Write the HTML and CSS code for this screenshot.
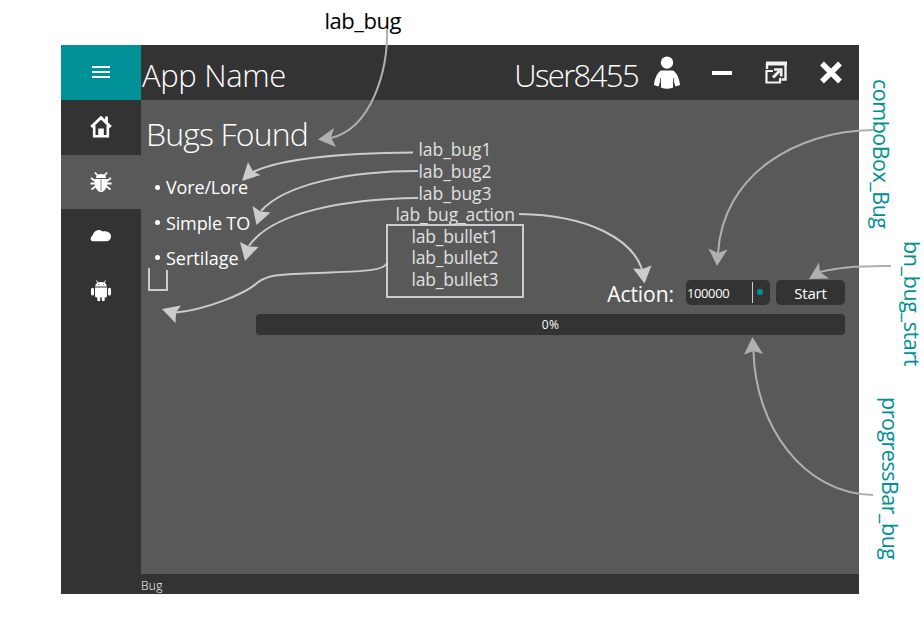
FILE: index.html
```html
<!DOCTYPE html>
<html lang="en">
<head>
<meta charset="utf-8">
<title>App Name</title>
<link rel="stylesheet" href="styles.css">
</head>
<body>
<div class="window">
  <header class="topbar">
    <button class="menu" aria-label="Menu"><svg width="18" height="14" viewBox="0 0 18 14"><path d="M0 1H18M0 6H18M0 11H18" stroke="#fff" stroke-width="2"/></svg></button>
    <h1 class="app-name">App Name</h1>
    <span class="user">User8455</span>
    <svg class="person" width="28" height="34" viewBox="0 0 28 34" fill="#fff"><circle cx="14" cy="6.6" r="6.2"/><path d="M8 14.5H20C24 17 26.5 23 27 29L22.5 30.5 20.2 24V31.5Q14 34 7.800 31.500V24L5.500 30.500 1 29C1.500 23 4 17 8 14.500Z"/><path d="M7.400 22V31M20.600 22V31" stroke="#333" stroke-width=".8"/></svg>
    <div class="controls">
      <svg width="22" height="24" viewBox="0 0 22 24"><path d="M1 12H21" stroke="#fff" stroke-width="4"/></svg>
      <svg width="22" height="24" viewBox="0 0 22 24" fill="none" stroke="#f2f2f2"><path d="M1 2.500H22" stroke-width="4"/><path d="M2 2V8M20.500 2V18.500H16.500" stroke-width="2.400"/><path d="M8 10H1.500V21.500H15V17" stroke-width="2.200"/><path d="M8 16.500L14.500 10" stroke-width="3"/><path d="M9 8.500H16.200V15.500" stroke-width="2.600"/></svg>
      <svg width="24" height="24" viewBox="0 0 24 24"><path d="M3 2.500L21 20.500M21 2.500L3 20.500" stroke="#fff" stroke-width="5.400"/></svg>
    </div>
  </header>
  <div class="body">
    <nav class="sidebar">
      <a class="item"><svg width="22" height="22" viewBox="0 0 22 22" fill="none" stroke="#fff"><path d="M1.200 11L11 1.700 20.800 11" stroke-width="3"/><path d="M16.500 .500V7" stroke-width="2.800"/><path d="M4.200 9.500V20.300H17.800V9.500" stroke-width="2.600"/><path d="M8.200 21V12.500H13.800V21Z" fill="#fff" stroke="none"/></svg></a>
      <a class="item active"><svg width="22" height="22" viewBox="0 0 22 22"><path d="M5 1.500L8 5M17 1.500L14 5M1 7L5 10M21 7L17 10M.500 12.500H21.500M1.500 18.500L6 15M20.500 18.500L16 15" stroke="#fff" stroke-width="1.800" fill="none"/><path d="M6 7C6 1.800 16 1.800 16 7ZM4.800 8H17.200C18 14 16 20.500 11 21.200 6 20.500 4 14 4.800 8Z" fill="#fff"/><path d="M11 8V20" stroke="#777" stroke-width=".9"/></svg></a>
      <a class="item"><svg width="22" height="22" viewBox="0 0 22 22" fill="#fff"><path d="M2.800 16.300C-.500 15.800 .500 11.800 2.500 10.500 4 5.300 8.500 3.300 12.500 6.500 16 5.500 21.300 7.500 21 11.500 20.900 14.500 19 16.300 16.500 16.300Z"/></svg></a>
      <a class="item"><svg width="22" height="22" viewBox="0 0 22 22" fill="#fff"><path d="M5.200 6.500C5.200 .600 16.800 .600 16.800 6.500ZM5 7.500H17V16Q17 17.500 15 17.500H14.700V20.500Q13.200 22 11.800 20.500V17.500H10.200V20.500Q8.800 22 7.300 20.500V17.500H7Q5 17.500 5 16Z"/><path d="M6.500 .500L8 3M15.500 .500L14 3" stroke="#fff" stroke-width="1"/><path d="M2.500 9.200V14M19.500 9.200V14" stroke="#fff" stroke-width="3" stroke-linecap="round"/><path d="M8 4.500H9M13 4.500H14" stroke="#888"/></svg></a>
    </nav>
    <main class="content">
      <h2 class="title">Bugs Found</h2>
      <ul class="bugs"><li>Vore/Lore</li><li>Simple TO</li><li>Sertilage</li></ul>
      <div class="actions">
        <span class="action-label">Action:</span>
        <div class="combo"><span class="value">100000</span><span class="drop"><i class="dot"></i></span></div>
        <button class="start">Start</button>
      </div>
      <div class="progress">0%</div>
    </main>
  </div>
  <footer class="status">Bug</footer>
</div>

<svg class="notes" width="924" height="639" viewBox="0 0 924 639">
  <g class="line dim">
    <path d="M387 29C388 70 372 128 331 138"/>
    <path d="M873 130C795 131 723 175 718 253"/>
    <path d="M891 266C860 265.500 835 268 820 272"/>
    <path d="M873 495C803 494 755 425 753.500 351"/>
  </g>
  <g class="head dim">
    <path d="M318 139.500L334 128 331 137.500 336 147Z"/>
    <path d="M717 266L708.500 248.500 718 253 727.500 249.500Z"/>
    <path d="M809 279L819 262.500 820 272 829 278.500Z"/>
    <path d="M752.500 337L744 354.500 753.500 351 763 354Z"/>
  </g>
  <g class="line">
    <path d="M413 152.500C350 153 285 157 253 172"/>
    <path d="M418 171C350 171 285 184 261 211"/>
    <path d="M418 198C345 199 272 212 249 246"/>
    <path d="M387 263C383 273 350 271 293 274C275 275 266 276 257 283C245 294 205 310 176 312.500"/>
    <path d="M519 214C590 215 632 240 642 269"/>
    <path d="M149 268V290H167V270"/>
    <rect x="387" y="225" width="136" height="72"/>
  </g>
  <g class="head">
    <path d="M242 181L248 162 253 171.500 260.500 175Z"/>
    <path d="M256.500 225L252.500 206 260.500 211.500 270.500 212.500Z"/>
    <path d="M245 261L240 242 249 246.500 258.500 247Z"/>
    <path d="M162 309L181 305.500 176 312.500 175.500 323Z"/>
    <path d="M644.500 283.500L633 268.500 642.500 269 651.500 265.500Z"/>
  </g>
  <text class="big" x="324.500" y="28.500" textLength="77">lab_bug</text>
  <g class="small">
    <text x="418.500" y="156" textLength="73">lab_bug1</text>
    <text x="418.500" y="178" textLength="73">lab_bug2</text>
    <text x="418.500" y="200" textLength="73">lab_bug3</text>
    <text x="395.500" y="221" textLength="119.500">lab_bug_action</text>
    <text x="411.500" y="243" textLength="87">lab_bullet1</text>
    <text x="411.500" y="264" textLength="87">lab_bullet2</text>
    <text x="411.500" y="286" textLength="87">lab_bullet3</text>
  </g>
  <g class="side">
    <text transform="translate(873 79) rotate(90)" textLength="150">comboBox_Bug</text>
    <text transform="translate(904 241) rotate(90)" textLength="125.500">bn_bug_start</text>
    <text transform="translate(882 397) rotate(90)" textLength="163">progressBar_bug</text>
  </g>
</svg>
</body>
</html>
```
FILE: styles.css
```css
* { box-sizing: border-box; }
body {
  margin: 0;
  padding: 45px 0 0 61px;
  height: 639px;
  overflow: hidden;
  background: #fff;
  color: #fff;
  font-family: "Open Sans", "Noto Sans", sans-serif;
}
button { border: 0; padding: 0; color: inherit; font: inherit; }
h1, h2, ul { margin: 0; padding: 0; font-weight: 300; }
svg { display: block; flex: none; }

.window { width: 798px; height: 549px; display: flex; flex-direction: column; background: #333; }

.topbar { height: 55px; display: flex; align-items: center; padding-right: 16px; }
.menu { width: 80px; height: 55px; background: #009097; display: grid; place-items: center; }
.app-name { flex: 1; padding: 5px 0 0 1px; font-size: 31px; line-height: 50px; letter-spacing: -0.35px; }
.user { padding-top: 5px; font-size: 31px; font-weight: 300; line-height: 50px; letter-spacing: -1.6px; }
.person { margin: 0 30px 0 15px; }
.controls { display: flex; gap: 32px; }

.body { flex: 1; display: flex; }
.sidebar { width: 80px; }
.item { height: 54.5px; display: grid; place-items: center; }
.active { background: #595959; }

.content { flex: 1; background: #595959; padding: 12px 14px 0 0; }
.title { padding-left: 5px; font-size: 32px; line-height: 44px; letter-spacing: -0.85px; }
.bugs { list-style: none; margin-top: 13px; }
.bugs li { display: flex; align-items: center; height: 36px; padding-left: 14px; gap: 6px; font-size: 18px; font-weight: 400; line-height: 36px; letter-spacing: -0.15px; }
.bugs li:nth-child(3) { height: 35px; line-height: 35px; letter-spacing: 0; }
.bugs li::before { content: ""; width: 5px; height: 5px; border-radius: 50%; background: #fff; }
.bugs li:nth-child(2)::before { margin-top: -1px; }
.bugs li:nth-child(3)::before { margin-top: -2px; }

.actions { display: flex; justify-content: flex-end; height: 25px; margin-top: 4px; }
.action-label { margin-right: 12px; padding-top: 2px; font-size: 21px; line-height: 25px; letter-spacing: -0.05px; }
.combo { width: 84px; display: flex; align-items: center; border-radius: 5px; background: #333; }
.value { flex: 1; padding: 2px 0 0 1px; font-size: 13px; line-height: 23px; letter-spacing: -0.4px; }
.drop { width: 18px; height: 21px; display: flex; align-items: center; padding-left: 4px; border-left: 1px solid #ccc; }
.dot { width: 6px; height: 6px; margin-top: -1px; border-radius: 50%; background: #009097; }
.start { width: 69px; margin-left: 6px; padding-top: 2px; border-radius: 5px; background: #333; font-size: 15px; line-height: 23px; letter-spacing: -0.2px; }
.progress { height: 21px; margin: 9px 0 0 115px; border-radius: 4px; background: #333; text-align: center; font-size: 12px; line-height: 22px; letter-spacing: 0.4px; }

.status { height: 20px; padding-left: 80px; font-size: 12px; font-weight: 300; line-height: 23px; letter-spacing: 0.3px; }

.notes { position: absolute; left: 0; top: 0; }
.line { fill: none; stroke: #ccc; stroke-width: 2; }
.line.dim { stroke: #b0b0b0; }
.head { fill: #ccc; }
.head.dim { fill: #b0b0b0; }
.big { font-size: 22px; fill: #000; }
.small { font-size: 17.5px; fill: #e0e0e0; }
.side { font-size: 21.5px; fill: #009097; }
```
